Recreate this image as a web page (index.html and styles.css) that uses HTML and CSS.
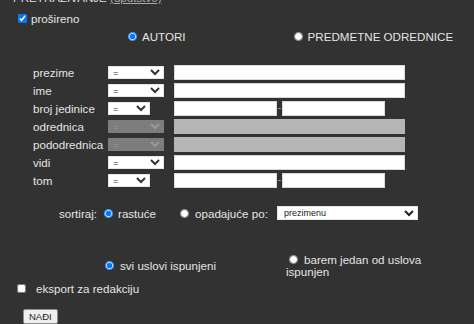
FILE: index.html
```html
<!DOCTYPE html>
<html lang="sr">
<head>
  <meta charset="UTF-8" />
  <meta name="viewport" content="width=device-width, initial-scale=1.0"/>
  <title>Pretraživanje</title>
  <link rel="stylesheet" href="styles.css">
</head>
<body>
  <form class="search">
    <div class="title">PRETRAŽIVANJE <a href="#">(uputstvo)</a></div>

    <label class="expand"><input type="checkbox" checked /> prošireno</label>

    <div class="scope">
      <label class="scope-item"><input type="radio" name="scope" checked />AUTORI</label>
      <label class="scope-item scope-alt"><input type="radio" name="scope" />PREDMETNE ODREDNICE</label>
    </div>

    <div class="fields">
      <span class="field-label">prezime</span>
      <select class="op"><option>=</option><option>počinje</option></select>
      <input type="text" class="value" />

      <span class="field-label">ime</span>
      <select class="op"><option>=</option><option>počinje</option></select>
      <input type="text" class="value" />

      <span class="field-label">broj jedinice</span>
      <select class="op op-short"><option>=</option><option>&lt;</option><option>&gt;</option></select>
      <div class="range">
        <input type="text" class="value" />
        <span class="dash">-</span>
        <input type="text" class="value" />
      </div>

      <span class="field-label">odrednica</span>
      <select class="op" disabled><option>=</option></select>
      <input type="text" class="value" disabled />

      <span class="field-label">pododrednica</span>
      <select class="op" disabled><option>=</option></select>
      <input type="text" class="value" disabled />

      <span class="field-label">vidi</span>
      <select class="op"><option>=</option><option>počinje</option></select>
      <input type="text" class="value" />

      <span class="field-label">tom</span>
      <select class="op op-short"><option>=</option><option>&lt;</option><option>&gt;</option></select>
      <div class="range">
        <input type="text" class="value" />
        <span class="dash">-</span>
        <input type="text" class="value" />
      </div>
    </div>

    <div class="sort">
      <span class="sort-label">sortiraj:</span>
      <label class="sort-item"><input type="radio" name="order" checked />rastuće</label>
      <label class="sort-item sort-desc"><input type="radio" name="order" />opadajuće po:</label>
      <select class="sort-by">
        <option>prezimenu</option>
        <option>imenu</option>
        <option>broju jedinice</option>
      </select>
    </div>

    <div class="conditions">
      <label class="cond-all"><input type="radio" name="cond" checked />svi uslovi ispunjeni</label>
      <label class="cond-any"><input type="radio" name="cond" />barem jedan od uslova ispunjen</label>
    </div>

    <label class="export"><input type="checkbox" />eksport za redakciju</label>

    <button type="submit" class="find">NAĐI</button>
  </form>
</body>
</html>
```

FILE: styles.css
```css
body {
  margin: 0;
  background: #323232;
  color: #e4e4e4;
  font-family: "Liberation Sans", Arial, sans-serif;
  font-size: 11.6px;
  overflow: hidden;
}

.search {
  display: flex;
  flex-direction: column;
  align-items: flex-start;
}

input[type="radio"],
input[type="checkbox"] {
  width: 9px;
  height: 9px;
  margin: 0;
}

.title {
  margin: -8px 0 0 13px;
  height: 13px;
  line-height: 12px;
  color: #dcdcdc;
}

.title a {
  color: #a8a8a8;
}

.expand {
  display: flex;
  align-items: center;
  height: 17px;
  margin-top: 5px;
  padding-left: 18px;
}

.expand input {
  margin-right: 4px;
}

.scope {
  display: flex;
  align-items: center;
  height: 18px;
  padding-left: 128px;
}

.scope-item {
  display: flex;
  align-items: center;
}

.scope-item input {
  margin-right: 5px;
}

.scope-alt {
  margin-left: 108px;
}

/* search fields */
.fields {
  display: grid;
  grid-template-columns: 75px 66px 231px;
  grid-auto-rows: 18px;
  align-items: center;
  margin-top: 18px;
  padding-left: 33px;
}

.op {
  width: 56px;
  height: 13px;
  padding: 0;
  font-size: 9px;
  font-family: "Liberation Sans", Arial, sans-serif;
  color: #333;
  background: #fff;
  border: 1px solid #e6e6e6;
  border-radius: 0;
}

.op-short {
  width: 42px;
}

.op:disabled {
  background: #9d9d9d;
  border-color: #9d9d9d;
  color: #c4c4c4;
}

.value {
  box-sizing: border-box;
  width: 231px;
  height: 15px;
  padding: 0 2px;
  font-size: 10px;
  background: #fff;
  border: 1px solid #dadada;
  border-radius: 0;
}

.value:disabled {
  background: #b5b5b5;
  border-color: #b5b5b5;
}

.range {
  display: flex;
  align-items: center;
}

.range .value {
  width: 103px;
}

.dash {
  width: 5px;
  text-align: center;
  font-size: 10px;
  line-height: 10px;
  color: #a0a0a0;
}

/* sort order */
.sort {
  display: flex;
  align-items: center;
  height: 18px;
  margin-top: 15px;
  padding-left: 59px;
}

.sort-label {
  margin-right: 7px;
}

.sort-item {
  display: flex;
  align-items: center;
}

.sort-item input {
  margin-right: 5px;
}

.sort-desc {
  margin-left: 24px;
}

.sort-desc input {
  margin-right: 6px;
}

.sort-by {
  width: 141px;
  height: 14px;
  margin-left: 9px;
  padding: 0 0 0 2px;
  font-size: 9px;
  font-family: "Liberation Sans", Arial, sans-serif;
  color: #222;
  background: #fff;
  border: 1px solid #e6e6e6;
  border-radius: 0;
}

/* all / any */
.conditions {
  display: grid;
  grid-template-columns: 286px 150px;
  align-items: center;
  height: 27px;
  margin-top: 30px;
}

.cond-all {
  display: flex;
  align-items: center;
  padding-left: 105px;
}

.cond-all input {
  margin-right: 6px;
}

.cond-any {
  line-height: 12px;
}

.cond-any input {
  margin: 0 6px 0 3px;
  vertical-align: 0;
}

.export {
  display: flex;
  align-items: center;
  height: 18px;
  padding-left: 17px;
}

.export input {
  margin-right: 10px;
}

.find {
  margin: 12px 0 0 23px;
  padding: 1px 5px;
  font-family: "Liberation Sans", Arial, sans-serif;
  font-size: 9.5px;
  color: #222;
  background: #efefef;
  border: 1px solid #8f8f8f;
  border-radius: 2px;
}
```
